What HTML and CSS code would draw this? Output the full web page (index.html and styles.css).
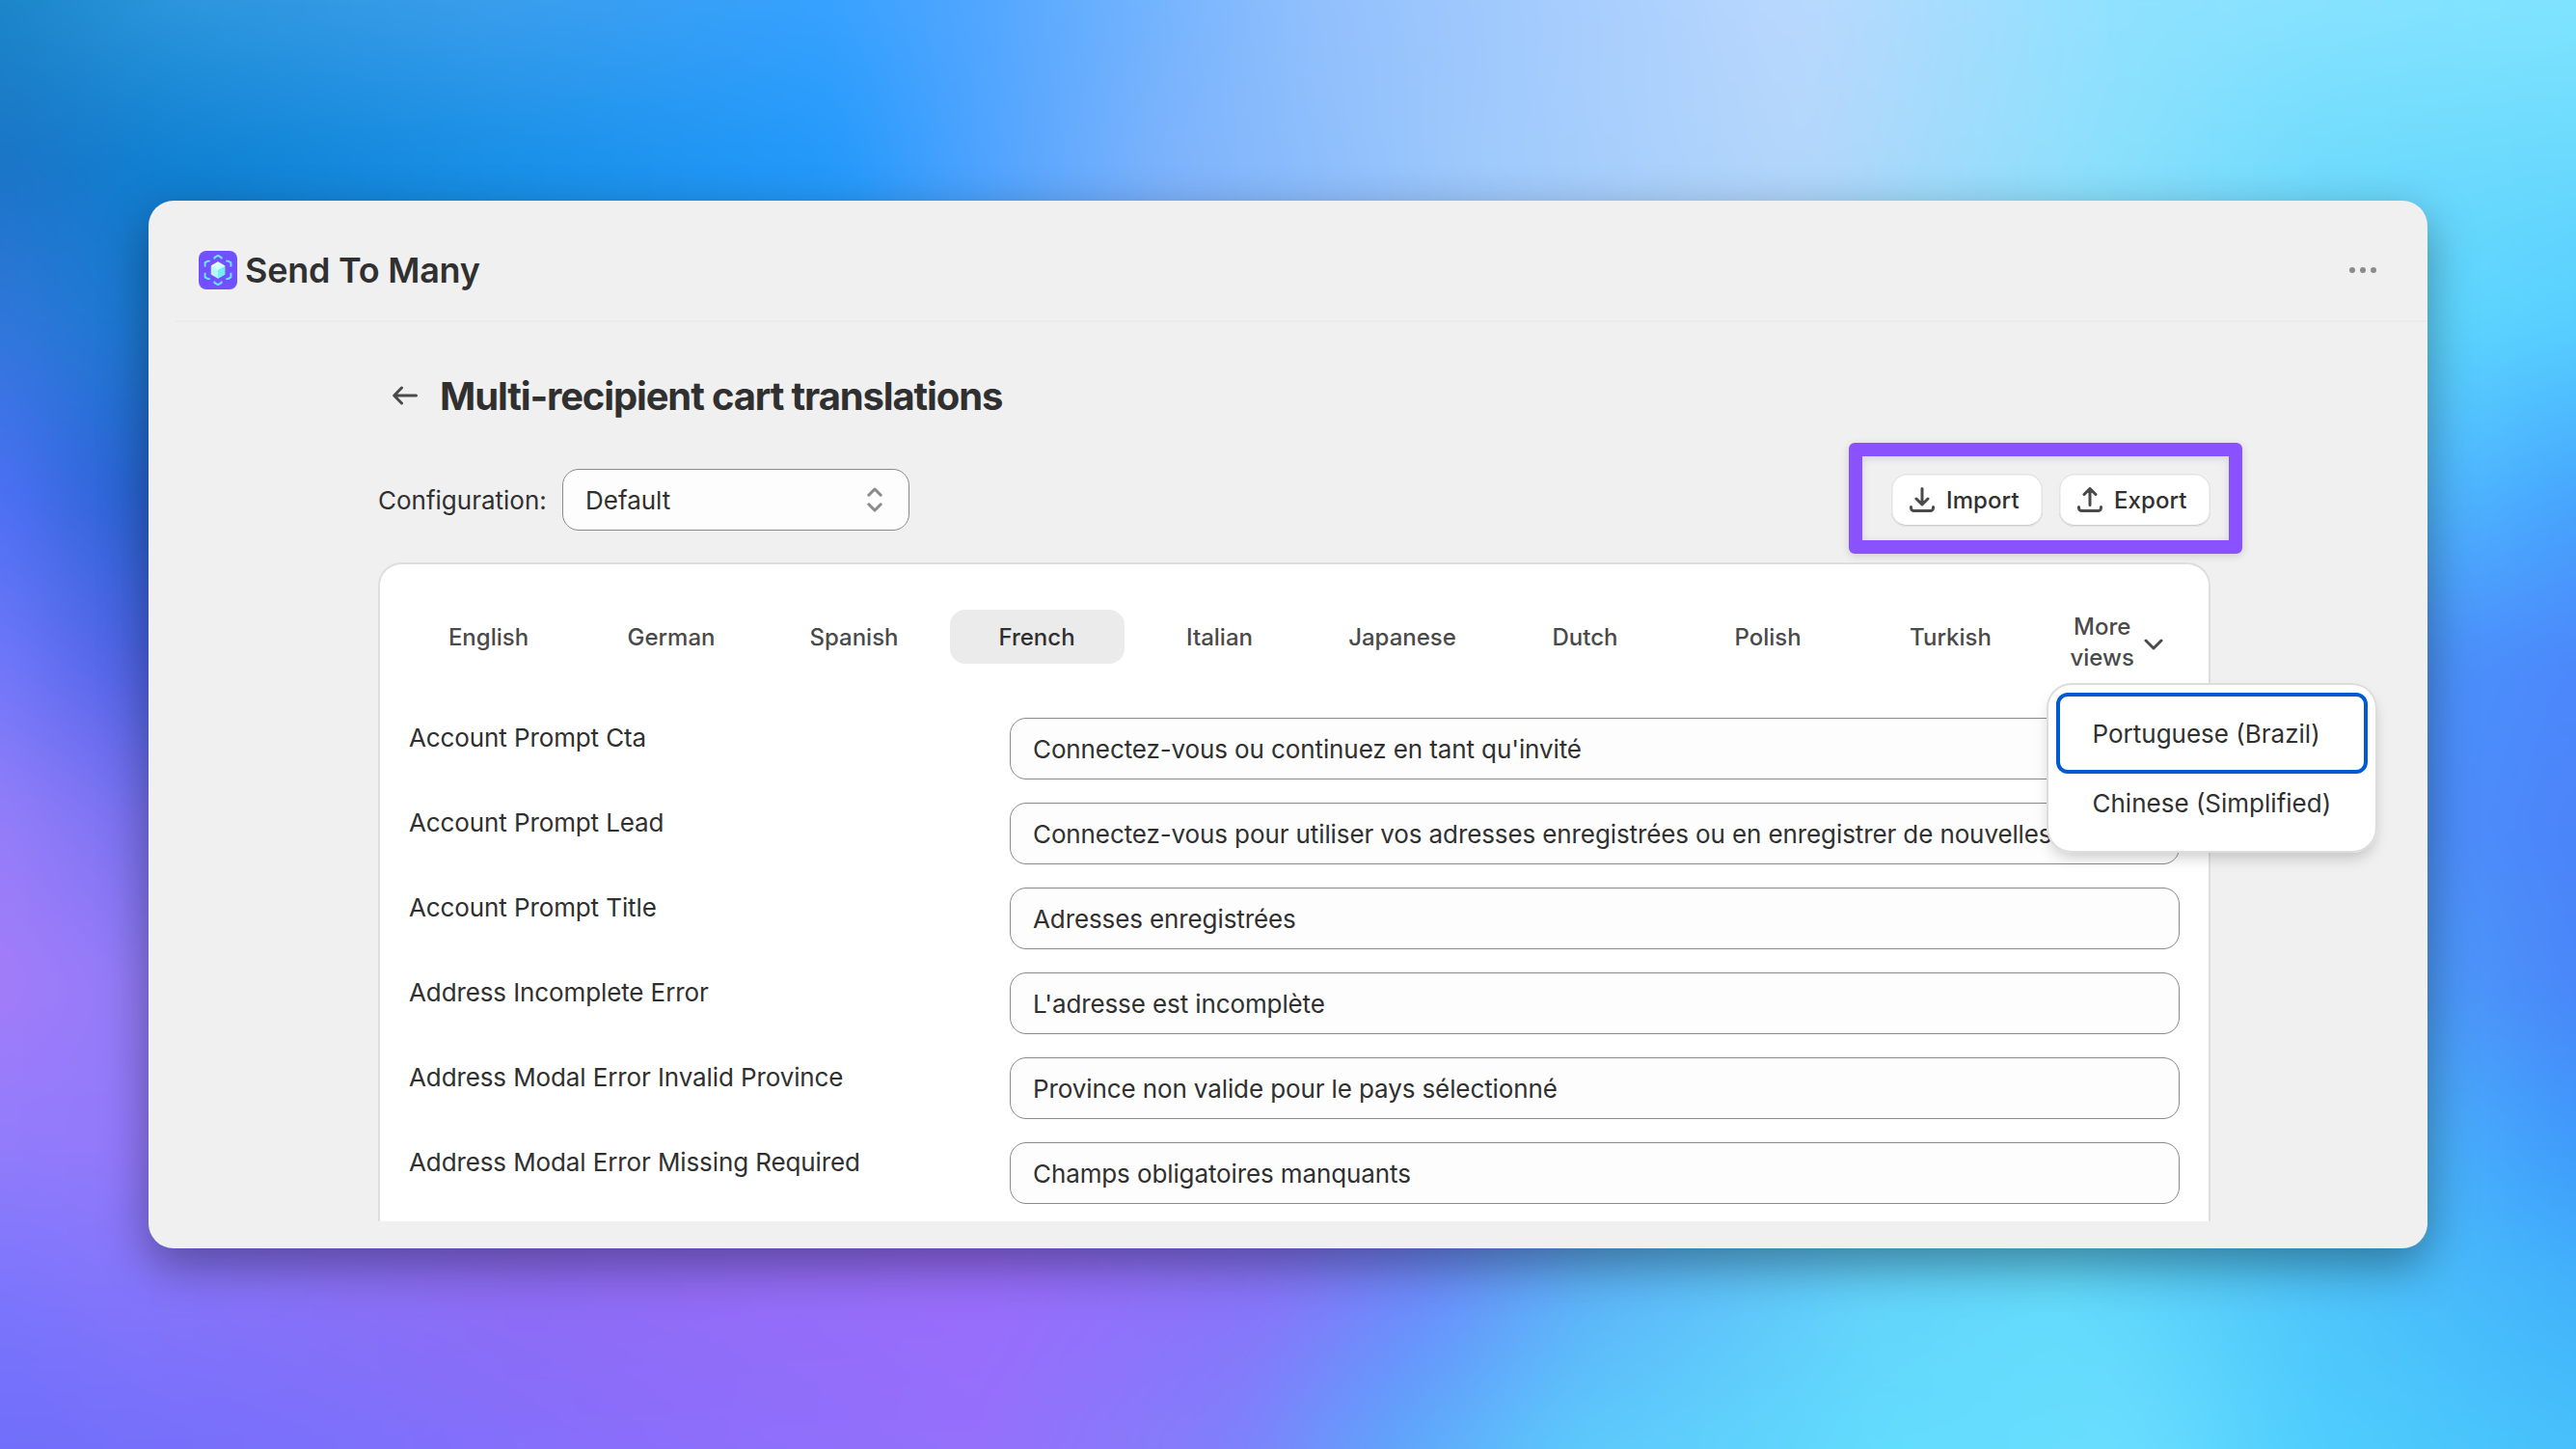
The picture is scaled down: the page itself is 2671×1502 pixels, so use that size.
FILE: index.html
```html
<!DOCTYPE html>
<html lang="en">
<head>
<meta charset="utf-8">
<title>Send To Many</title>
<link rel="stylesheet" href="styles.css">
</head>
<body>
<div class="backdrop">
  <div class="band band-1"></div>
  <div class="band band-2"></div>
  <div class="band band-3"></div>
  <div class="band band-4"></div>
  <div class="band band-5"></div>
  <div class="band band-6"></div>
  <div class="band band-7"></div>
  <div class="band band-8"></div>
  <div class="band band-9"></div>
</div>
<div class="window">
  <header class="app-bar">
    <svg class="logo" viewBox="0 0 40 40" width="40" height="40">
      <rect width="40" height="40" rx="8" fill="#7350ff"/>
      <g fill="none" stroke="#66ebff" stroke-width="1.9" stroke-linejoin="round">
        <path d="M16.4 8.4v-1.6L20 4.8l3.6 2v1.6M16.4 31.6v1.6l3.6 2 3.6-2v-1.6"/>
        <path d="M6.6 16.4v-4.2l3-1.6h2.2M33.4 16.4v-4.2l-3-1.6h-2.2M6.600 22.8v4.6l3 1.7h2.2M33.4 22.8v4.6l-3 1.7h-2.2"/>
      </g>
      <path d="M20 11.2l7.2 4.2v9L20 28.700l-7.200-4.300v-9z" fill="#b5f9ff"/>
      <path d="M20 19.700l7.200-4.300v9L20 28.700z" fill="#70f0ff"/>
      <path d="M20 11.200l7.200 4.200-7.200 4.300-7.200-4.300z" fill="#dcfdff"/>
    </svg>
    <span class="app-name">Send To Many</span>
    <svg class="dots" viewBox="0 0 28 6" width="28" height="6" fill="#8a8a8a"><circle cx="3" cy="3" r="3"/><circle cx="14" cy="3" r="3"/><circle cx="25" cy="3" r="3"/></svg>
  </header>
  <main class="page">
    <div class="title-row">
      <svg class="back" viewBox="0 0 26 20" width="26" height="20" fill="none" stroke="#4a4a4a" stroke-width="3" stroke-linecap="round" stroke-linejoin="round"><path d="M24.500 10H2M9.500 2L1.700 10l7.800 8"/></svg>
      <h1 class="title">Multi-recipient cart translations</h1>
    </div>
    <div class="toolbar">
      <span class="config-label">Configuration:</span>
      <div class="select">
        <span class="select-value">Default</span>
        <svg viewBox="0 0 16 26" width="16" height="26" fill="none" stroke="#8a8a8a" stroke-width="3" stroke-linecap="round" stroke-linejoin="round"><path d="M1.800 8.200L8 2l6.200 6.200M1.800 17.800L8 24l6.200-6.200"/></svg>
      </div>
      <div class="actions">
        <button class="btn">
          <svg viewBox="0 0 26 26" width="26" height="26" fill="none" stroke="#4a4a4a" stroke-width="3" stroke-linecap="round" stroke-linejoin="round"><path d="M13 1.500v16M7 12l6 6 6-6M1.500 20.500v1a3 3 0 0 0 3 3h17a3 3 0 0 0 3-3v-1"/></svg>
          <span class="btn-text">Import</span>
        </button>
        <button class="btn">
          <svg viewBox="0 0 26 26" width="26" height="26" fill="none" stroke="#4a4a4a" stroke-width="3" stroke-linecap="round" stroke-linejoin="round"><path d="M13 18.500V2M7 7.500l6-6 6 6M1.500 20.500v1a3 3 0 0 0 3 3h17a3 3 0 0 0 3-3v-1"/></svg>
          <span class="btn-text">Export</span>
        </button>
        <div class="highlight"></div>
      </div>
    </div>
    <section class="panel">
      <nav class="tabs">
        <span class="tab">English</span>
        <span class="tab">German</span>
        <span class="tab">Spanish</span>
        <span class="tab active">French</span>
        <span class="tab">Italian</span>
        <span class="tab">Japanese</span>
        <span class="tab">Dutch</span>
        <span class="tab">Polish</span>
        <span class="tab">Turkish</span>
        <div class="more">
          <span class="more-text">More<br>views</span>
          <svg class="chevron" viewBox="0 0 20 12" width="20" height="12" fill="none" stroke="#4a4a4a" stroke-width="3" stroke-linecap="round" stroke-linejoin="round"><path d="M2 2l8 8 8-8"/></svg>
          <div class="menu">
            <div class="option focused">Portuguese (Brazil)</div>
            <div class="option">Chinese (Simplified)</div>
          </div>
        </div>
      </nav>
      <div class="rows">
        <div class="row"><span class="label">Account Prompt Cta</span><div class="field">Connectez-vous ou continuez en tant qu'invité</div></div>
        <div class="row"><span class="label">Account Prompt Lead</span><div class="field">Connectez-vous pour utiliser vos adresses enregistrées ou en enregistrer de nouvelles</div></div>
        <div class="row"><span class="label">Account Prompt Title</span><div class="field">Adresses enregistrées</div></div>
        <div class="row"><span class="label">Address Incomplete Error</span><div class="field">L'adresse est incomplète</div></div>
        <div class="row"><span class="label">Address Modal Error Invalid Province</span><div class="field">Province non valide pour le pays sélectionné</div></div>
        <div class="row"><span class="label">Address Modal Error Missing Required</span><div class="field">Champs obligatoires manquants</div></div>
      </div>
    </section>
  </main>
</div>
</body>
</html>
```
FILE: styles.css
```css
* { box-sizing: border-box; }

body {
  margin: 0;
  width: 2671px;
  height: 1502px;
  padding: 208px 154px;
  position: relative;
  overflow: hidden;
  font-family: Inter, "Liberation Sans", sans-serif;
  font-size: 26px;
  line-height: 40px;
  color: #303030;
}

/* Backdrop: horizontal gradients that cross-fade into each other downwards */
.backdrop {
  position: absolute;
  inset: -60px;
  background: linear-gradient(to right, #1b86c9 60px, #2c96dd 230px, #3b9eec 570px, #37a2ff 910px, #52a7ff 1080px, #92c0fd 1420px, #bad9fe 1930px, #8ee2ff 2270px, #7fe4ff 2730px);
  filter: blur(24px);
}
.band {
  position: absolute;
  left: 0;
  right: 0;
  bottom: 0;
  -webkit-mask-image: linear-gradient(to bottom, transparent, #000 var(--fade));
  mask-image: linear-gradient(to bottom, transparent, #000 var(--fade));
  --fade: 170px;
}
.band-1 { top: 60px; background: linear-gradient(to right, #1b74c6 60px, #0f80d0 230px, #188fe6 570px, #2499fb 930px, #4fa3ff 1080px, #7cb2fc 1260px, #9fcafc 1600px, #b4d6fb 1930px, #8ce0fc 2230px, #70dbfd 2470px, #6ad9fd 2730px); }
.band-2 { top: 230px; background: linear-gradient(to right, #3277dc 60px, #1b78d0 200px, #188fe6 570px, #2499fb 930px, #7cb2fc 1260px, #b0d4fb 1800px, #8ce0fc 2100px, #5cd5fe 2600px, #56ceff 2730px); }
.band-3 { top: 400px; background: linear-gradient(to right, #4d70f5 60px, #2663d0 200px, #2663d0 300px, #50c0fe 2500px, #4fb8ff 2600px, #46a6fd 2730px); }
.band-4 { top: 570px; background: linear-gradient(to right, #7078fa 60px, #4a62e4 200px, #4a62e4 300px, #4a98fa 2500px, #4c88fb 2730px); }
.band-5 { top: 740px; background: linear-gradient(to right, #957ef9 60px, #7a72f2 200px, #7a72f2 300px, #4c94fa 2500px, #4c84fa 2730px); }
.band-6 { top: 910px; background: linear-gradient(to right, #a47cf9 60px, #927cf8 200px, #927cf8 300px, #4ea4fa 2500px, #4a86f9 2730px); }
.band-7 { top: 1080px; background: linear-gradient(to right, #917cfb 60px, #9379fb 200px, #9070f8 600px, #9270fa 1100px, #7a80fa 1500px, #58b8fa 1800px, #50bcfa 2500px, #3f9bfb 2730px); }
.band-8 { top: 1250px; --fade: 140px; background: linear-gradient(to right, #7c76fc 60px, #8576fb 200px, #8f6cf4 600px, #996dfb 1080px, #8874fa 1380px, #6c8bfb 1540px, #5cb4f9 1710px, #64d4fb 2000px, #64dcfb 2200px, #50c6fb 2450px, #42b2fb 2730px); }
.band-9 { top: 1390px; --fade: 172px; background: linear-gradient(to right, #706efb 60px, #7b70fb 400px, #8a6efb 740px, #9570fb 1080px, #7f80fb 1340px, #5fa4fb 1500px, #5cc8fb 1680px, #62dcfd 2020px, #6addfe 2270px, #50cefd 2450px, #47c0fb 2730px); }

.window {
  position: relative;
  height: 1086px;
  background: #f0f0f0;
  border-radius: 26px;
  box-shadow: 0 18px 50px rgba(0, 0, 0, 0.38);
}

.app-bar {
  display: flex;
  align-items: center;
  height: 126px;
  margin-left: 28px;
  padding: 20px 53px 0 24px;
  border-bottom: 2px solid #ebebeb;
}
.app-name {
  margin-left: 8px;
  font-size: 36px;
  font-weight: 600;
  letter-spacing: -0.25px;
}
.dots { margin-left: auto; }

.page { width: 1900px; margin-left: 238px; }

.title-row {
  display: flex;
  align-items: center;
  height: 56px;
  margin-top: 48px;
  padding-left: 15px;
}
.title {
  margin: 0 0 0 23px;
  padding-top: 2px;
  font-size: 40px;
  font-weight: 700;
  letter-spacing: -1.14px;
  white-space: nowrap;
}

.toolbar {
  display: flex;
  align-items: center;
  height: 64px;
  margin-top: 48px;
}
.config-label { width: 191px; padding-top: 2px; }
.select {
  display: flex;
  align-items: center;
  justify-content: space-between;
  width: 360px;
  height: 64px;
  padding: 0 27px 0 23px;
  border: 1px solid #8a8a8a;
  border-radius: 17px;
  background: #fdfdfd;
}
.select-value { padding-top: 2px; }
.actions {
  position: relative;
  display: flex;
  gap: 17px;
  margin-left: auto;
}
.btn {
  display: flex;
  align-items: center;
  gap: 12px;
  width: 157px;
  height: 55px;
  padding: 0 0 0 19px;
  border: 0;
  border-radius: 16px;
  background: #fff;
  box-shadow: inset 0 0 0 1.500px #e3e3e3, inset 0 -2px 0 #b5b5b5;
  font: 550 24px/40px Inter, "Liberation Sans", sans-serif;
  letter-spacing: 0.1px;
  color: #303030;
}
.btn-text { padding-top: 1px; }
.highlight {
  position: absolute;
  left: -44px;
  top: -32px;
  width: 408px;
  height: 115px;
  border: 14px solid #8a51ff;
  border-radius: 6px;
  box-shadow: 0 2px 8px rgba(0, 0, 0, 0.15), inset 0 2px 8px rgba(0, 0, 0, 0.12);
}

.panel {
  height: 683px;
  margin-top: 33px;
  padding: 47px 30px 0 22px;
  background: #fff;
  border: 2px solid #dedede;
  border-bottom: 0;
  border-radius: 24px 24px 0 0;
}
.tabs {
  display: flex;
  align-items: center;
  gap: 8.500px;
  height: 56px;
  font-size: 24px;
  font-weight: 550;
  color: #4a4a4a;
}
.tab {
  flex: none;
  width: 181px;
  height: 56px;
  border-radius: 16px;
  line-height: 58px;
  text-align: center;
}
.active { background: #ebebeb; color: #303030; }
.more {
  position: relative;
  display: flex;
  align-items: center;
  gap: 10px;
  padding: 12px 0 0 25px;
}
.more-text { line-height: 32px; text-align: center; }
.chevron { margin-top: 3px; }
.menu {
  position: absolute;
  left: 0;
  top: 86px;
  width: 343px;
  height: 176px;
  padding: 10px;
  background: #fff;
  border-radius: 26px;
  box-shadow: inset 0 0 0 2px #dcdcdc, 0 8px 16px -4px rgba(0, 0, 0, 0.22);
  font-size: 26px;
  font-weight: 400;
  color: #303030;
}
.option { height: 60px; padding-left: 38px; line-height: 61px; }
.focused {
  height: 84px;
  padding-left: 34px;
  border: 4px solid #005bd3;
  border-radius: 12px;
  line-height: 77px;
}

.rows {
  display: grid;
  gap: 24px;
  margin-top: 56px;
  padding-left: 8px;
  letter-spacing: -0.11px;
}
.row { display: flex; height: 64px; }
.label { width: 623px; padding-top: 1px; }
.field {
  width: 1213px;
  padding: 0 23px;
  border: 1px solid #8a8a8a;
  border-radius: 17px;
  background: #fdfdfd;
  line-height: 64px;
  white-space: nowrap;
  overflow: hidden;
}
```
